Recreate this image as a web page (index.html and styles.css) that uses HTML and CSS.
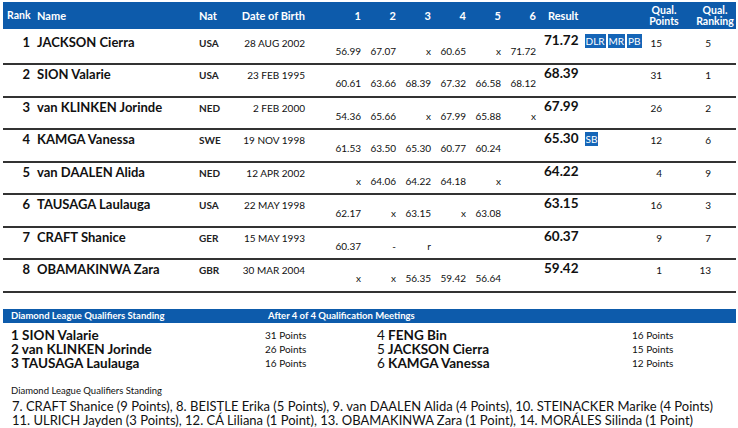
FILE: index.html
```html
<!DOCTYPE html>
<html>
<head>
<meta charset="utf-8">
<link rel="stylesheet" href="styles.css">
</head>
<body>
<div class="page">
  <div class="results">
    <div class="row head">
      <div class="c-rank">Rank</div>
      <div class="c-name">Name</div>
      <div class="c-nat">Nat</div>
      <div class="c-dob">Date of Birth</div>
      <div class="c-att">1</div><div class="c-att">2</div><div class="c-att">3</div><div class="c-att">4</div><div class="c-att">5</div><div class="c-att">6</div>
      <div class="c-res">Result</div>
      <div class="c-qp">Qual.<br>Points</div>
      <div class="c-qr">Qual.<br>Ranking</div>
    </div>

    <div class="row athlete first">
      <div class="c-rank">1</div><div class="c-name">JACKSON Cierra</div><div class="c-nat">USA</div><div class="c-dob">28 AUG 2002</div>
      <div class="c-att">56.99</div><div class="c-att">67.07</div><div class="c-att">x</div><div class="c-att">60.65</div><div class="c-att">x</div><div class="c-att">71.72</div>
      <div class="c-res">71.72<span class="badges"><span class="badge">DLR</span><span class="badge">MR</span><span class="badge">PB</span></span></div>
      <div class="c-qp">15</div><div class="c-qr">5</div>
    </div>
    <div class="row athlete">
      <div class="c-rank">2</div><div class="c-name">SION Valarie</div><div class="c-nat">USA</div><div class="c-dob">23 FEB 1995</div>
      <div class="c-att">60.61</div><div class="c-att">63.66</div><div class="c-att">68.39</div><div class="c-att">67.32</div><div class="c-att">66.58</div><div class="c-att">68.12</div>
      <div class="c-res">68.39</div>
      <div class="c-qp">31</div><div class="c-qr">1</div>
    </div>
    <div class="row athlete">
      <div class="c-rank">3</div><div class="c-name">van KLINKEN Jorinde</div><div class="c-nat">NED</div><div class="c-dob">2 FEB 2000</div>
      <div class="c-att">54.36</div><div class="c-att">65.66</div><div class="c-att">x</div><div class="c-att">67.99</div><div class="c-att">65.88</div><div class="c-att">x</div>
      <div class="c-res">67.99</div>
      <div class="c-qp">26</div><div class="c-qr">2</div>
    </div>
    <div class="row athlete">
      <div class="c-rank">4</div><div class="c-name">KAMGA Vanessa</div><div class="c-nat">SWE</div><div class="c-dob">19 NOV 1998</div>
      <div class="c-att">61.53</div><div class="c-att">63.50</div><div class="c-att">65.30</div><div class="c-att">60.77</div><div class="c-att">60.24</div><div class="c-att"></div>
      <div class="c-res">65.30<span class="badges"><span class="badge">SB</span></span></div>
      <div class="c-qp">12</div><div class="c-qr">6</div>
    </div>
    <div class="row athlete">
      <div class="c-rank">5</div><div class="c-name">van DAALEN Alida</div><div class="c-nat">NED</div><div class="c-dob">12 APR 2002</div>
      <div class="c-att">x</div><div class="c-att">64.06</div><div class="c-att">64.22</div><div class="c-att">64.18</div><div class="c-att">x</div><div class="c-att"></div>
      <div class="c-res">64.22</div>
      <div class="c-qp">4</div><div class="c-qr">9</div>
    </div>
    <div class="row athlete">
      <div class="c-rank">6</div><div class="c-name">TAUSAGA Laulauga</div><div class="c-nat">USA</div><div class="c-dob">22 MAY 1998</div>
      <div class="c-att">62.17</div><div class="c-att">x</div><div class="c-att">63.15</div><div class="c-att">x</div><div class="c-att">63.08</div><div class="c-att"></div>
      <div class="c-res">63.15</div>
      <div class="c-qp">16</div><div class="c-qr">3</div>
    </div>
    <div class="row athlete">
      <div class="c-rank">7</div><div class="c-name">CRAFT Shanice</div><div class="c-nat">GER</div><div class="c-dob">15 MAY 1993</div>
      <div class="c-att">60.37</div><div class="c-att">-</div><div class="c-att">r</div><div class="c-att"></div><div class="c-att"></div><div class="c-att"></div>
      <div class="c-res">60.37</div>
      <div class="c-qp">9</div><div class="c-qr">7</div>
    </div>
    <div class="row athlete">
      <div class="c-rank">8</div><div class="c-name">OBAMAKINWA Zara</div><div class="c-nat">GBR</div><div class="c-dob">30 MAR 2004</div>
      <div class="c-att">x</div><div class="c-att">x</div><div class="c-att">56.35</div><div class="c-att">59.42</div><div class="c-att">56.64</div><div class="c-att"></div>
      <div class="c-res">59.42</div>
      <div class="c-qp">1</div><div class="c-qr">13</div>
    </div>
  </div>

  <div class="standing">
    <div class="standing-bar">
      <span class="sb-left">Diamond League Qualifiers Standing</span>
      <span class="sb-right">After 4 of 4 Qualification Meetings</span>
    </div>
    <div class="standing-list">
      <div class="s-name">1 SION Valarie</div><div class="s-pts">31 Points</div>
      <div class="s-name"><span class="s-num">4</span> FENG Bin</div><div class="s-pts">16 Points</div>
      <div class="s-name">2 van KLINKEN Jorinde</div><div class="s-pts">26 Points</div>
      <div class="s-name"><span class="s-num">5</span> JACKSON Cierra</div><div class="s-pts">15 Points</div>
      <div class="s-name">3 TAUSAGA Laulauga</div><div class="s-pts">16 Points</div>
      <div class="s-name"><span class="s-num">6</span> KAMGA Vanessa</div><div class="s-pts">12 Points</div>
    </div>
    <div class="caption">Diamond League Qualifiers Standing</div>
    <div class="rest">
      <div>7. CRAFT Shanice (9 Points), 8. BEISTLE Erika (5 Points), 9. van DAALEN Alida (4 Points), 10. STEINACKER Marike (4 Points)</div>
      <div>11. ULRICH Jayden (3 Points), 12. CÁ Liliana (1 Point), 13. OBAMAKINWA Zara (1 Point), 14. MORÁLES Silinda (1 Point)</div>
    </div>
  </div>
</div>
</body>
</html>
```
FILE: styles.css
```css
html, body {
  margin: 0;
  padding: 0;
  background: #ffffff;
}
body {
  font-family: Lato, "Open Sans", Arial, sans-serif;
  color: #111111;
}
.page {
  width: 733px;
  padding: 2px 0 0 3px;
}
.row {
  display: grid;
  grid-template-columns: 30px 166px 41px 86px repeat(6, 35px) 112px 46px 42px;
}
.head {
  background: #0d5bab;
  color: #ffffff;
  font-weight: 700;
  font-size: 11px;
  height: 27px;
  align-items: center;
  line-height: 11px;
}
.head > div { color: #ffffff; font-size: 11px; font-weight: 700; padding-top: 0; }
.head .c-rank { text-align: left; padding-left: 4px; padding-right: 0; font-size: 10.5px; }
.head .c-res { padding-left: 12px; }
.head .c-qp { text-align: center; padding-right: 14px; padding-top: 1px; line-height: 11.5px; font-size: 10.5px; }
.head .c-qr { text-align: center; padding-right: 0; padding-top: 1px; line-height: 11.5px; font-size: 10.5px; }

.athlete {
  height: 30.5px;
  border-bottom: 2px solid #333333;
  align-items: start;
}
.athlete.first {
  height: 34px;
}
.c-rank {
  text-align: right;
  padding-right: 3px;
  font-weight: 700;
  font-size: 13px;
}
.c-name {
  padding-left: 4px;
  font-weight: 700;
  font-size: 13px;
  white-space: nowrap;
}
.c-nat {
  font-size: 10px;
  font-weight: 700;
  color: #222;
}
.c-dob {
  font-size: 10px;
  text-align: right;
  padding-right: 21px;
  white-space: nowrap;
}
.c-att {
  font-size: 10px;
  text-align: right;
  white-space: nowrap;
}
.c-res {
  padding-left: 8px;
  font-size: 13.5px;
  font-weight: 700;
  white-space: nowrap;
}
.c-qp {
  font-size: 10px;
  text-align: right;
  padding-right: 32px;
}
.c-qr {
  font-size: 10px;
  text-align: right;
  padding-right: 25px;
}

.athlete > div { line-height: 14px; padding-top: 2px; }
.athlete.first > div { padding-top: 6px; }
.athlete > .c-nat, .athlete > .c-dob, .athlete > .c-qp, .athlete > .c-qr { padding-top: 3px; }
.athlete.first > .c-nat, .athlete.first > .c-dob, .athlete.first > .c-qp, .athlete.first > .c-qr { padding-top: 7px; }
.athlete > .c-att { padding-top: 11px; }
.athlete.first > .c-att { padding-top: 15px; }
.athlete > .c-res { padding-top: 1px; }
.athlete.first > .c-res { padding-top: 4px; }

.badges {
  display: inline-flex;
  gap: 2px;
  margin-left: 6px;
  vertical-align: top;
  margin-top: 1px;
}
.badge {
  background: #1565b7;
  color: #ffffff;
  font-size: 10px;
  font-weight: 400;
  line-height: 14px;
  padding: 0 1px;
}

.standing {
  margin-top: 16px;
}
.standing-bar {
  background: #0d5bab;
  color: #ffffff;
  font-size: 9.5px;
  font-weight: 700;
  height: 14px;
  line-height: 14px;
  display: grid;
  grid-template-columns: 257px 1fr;
  padding-left: 8px;
}
.standing-list {
  display: grid;
  grid-template-columns: 254px 112px 255px 1fr;
  padding-left: 8px;
  margin-top: 5px;
  align-items: center;
}
.s-name {
  font-size: 13.5px;
  font-weight: 700;
  line-height: 14px;
  white-space: nowrap;
}
.s-num { font-weight: 400; }
.s-pts {
  font-size: 10px;
  line-height: 14px;
}
.caption {
  font-size: 9.5px;
  padding-left: 8px;
  margin-top: 15px;
  line-height: 12px;
}
.rest {
  font-size: 13px;
  line-height: 14px;
  padding-left: 9px;
  margin-top: 2px;
  white-space: nowrap;
}
```
